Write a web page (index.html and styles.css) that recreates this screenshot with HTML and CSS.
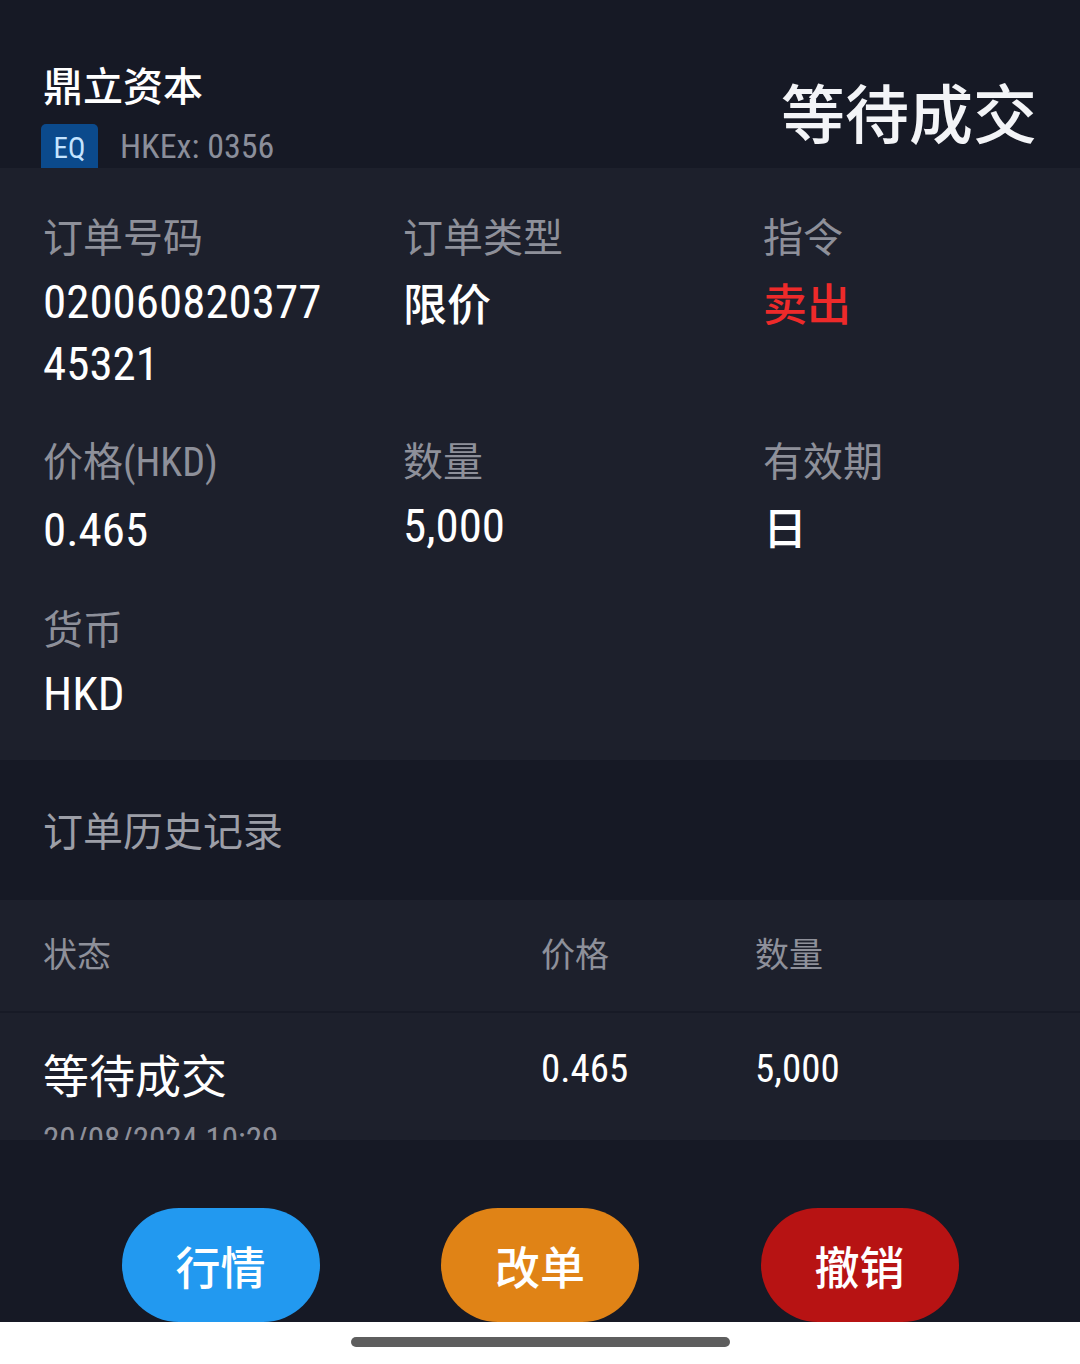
FILE: index.html
```html
<!DOCTYPE html>
<html lang="zh-CN">
<head>
    <meta charset="UTF-8">
    <meta name="viewport" content="width=device-width, initial-scale=1.0">
    <title>订单详情</title>
    <link rel="stylesheet" href="styles.css">
</head>
<body>
    <div class="screen">
        <div class="header">
            <div class="stock">
                <div class="stock-name">鼎立资本</div>
                <div class="stock-code">
                    <span class="badge">EQ</span>
                    <span class="code num">HKEx: 0356</span>
                </div>
            </div>
            <div class="order-status">等待成交</div>
        </div>

        <div class="details">
            <div class="field">
                <div class="label">订单号码</div>
                <div class="value num">020060820377<br>45321</div>
            </div>
            <div class="field">
                <div class="label">订单类型</div>
                <div class="value cjk">限价</div>
            </div>
            <div class="field">
                <div class="label">指令</div>
                <div class="value cjk sell">卖出</div>
            </div>
            <div class="field">
                <div class="label">价格<span class="num">(HKD)</span></div>
                <div class="value num">0.465</div>
            </div>
            <div class="field">
                <div class="label">数量</div>
                <div class="value num">5,000</div>
            </div>
            <div class="field">
                <div class="label">有效期</div>
                <div class="value cjk">日</div>
            </div>
            <div class="field">
                <div class="label">货币</div>
                <div class="value num">HKD</div>
            </div>
        </div>

        <div class="history-title">订单历史记录</div>

        <div class="history">
            <div class="history-row history-head">
                <div class="col-status">状态</div>
                <div class="col-price">价格</div>
                <div class="col-qty">数量</div>
            </div>
            <div class="history-row history-item">
                <div class="col-status">
                    <div class="item-status">等待成交</div>
                    <div class="item-time num">20/08/2024 10:29</div>
                </div>
                <div class="col-price num">0.465</div>
                <div class="col-qty num">5,000</div>
            </div>
        </div>

        <div class="actions">
            <button class="btn btn-quote">行情</button>
            <button class="btn btn-modify">改单</button>
            <button class="btn btn-cancel">撤销</button>
        </div>

        <div class="navbar">
            <div class="nav-pill"></div>
        </div>
    </div>
</body>
</html>
```

FILE: styles.css
```css
body {
    margin: 0;
    font-family: "Noto Sans CJK SC", "Noto Sans", sans-serif;
    background: #161925;
    color: #fff;
}

.screen {
    width: 1080px;
    height: 1364px;
    display: flex;
    flex-direction: column;
    overflow: hidden;
}

.num {
    font-family: "Roboto Condensed", Roboto, "Noto Sans CJK SC", sans-serif;
}

/* header */
.header {
    height: 168px;
    flex: none;
    display: flex;
    justify-content: space-between;
    padding: 0 43px;
    overflow: hidden;
    background: #161925;
}

.stock-name {
    padding-top: 60px;
    font-size: 40px;
    line-height: 48px;
    font-weight: 500;
}

.stock-code {
    display: flex;
    align-items: center;
    margin-top: 16px;
    gap: 22px;
}

.badge {
    width: 57px;
    height: 48px;
    margin-left: -2px;
    border-radius: 5px;
    background: #0b4a8c;
    color: #c4e4ff;
    font-family: "Roboto Condensed", Roboto, sans-serif;
    font-size: 29px;
    line-height: 48px;
    text-align: center;
}

.code {
    font-size: 34px;
    color: #8b8e9a;
    margin-top: -4px;
}

.order-status {
    padding-top: 72px;
    font-size: 64px;
    line-height: 76px;
    font-weight: 500;
    color: #f3f4f7;
}

/* order details */
.details {
    height: 592px;
    flex: none;
    box-sizing: border-box;
    padding: 43px 43px 0;
    background: #1d202c;
    display: grid;
    grid-template-columns: 360px 360px 1fr;
    align-content: start;
    row-gap: 40px;
}

.label {
    font-size: 40px;
    line-height: 48px;
    color: #8e909a;
}

.value {
    margin-top: 12px;
    min-height: 64px;
    font-size: 47px;
    line-height: 62px;
    color: #fff;
}

.value.cjk {
    font-family: "Noto Sans CJK SC", sans-serif;
    font-size: 44px;
    font-weight: 500;
}

.sell {
    color: #ee2a2a;
}

/* history */
.history-title {
    height: 140px;
    flex: none;
    box-sizing: border-box;
    padding: 45px 43px 0;
    font-size: 40px;
    line-height: 48px;
    color: #9c9ea7;
}

.history {
    height: 240px;
    flex: none;
    background: #1d202c;
    overflow: hidden;
}

.history-row {
    display: grid;
    grid-template-columns: 498px 214px 1fr;
    padding: 0 43px;
}

.history-head {
    height: 113px;
    box-sizing: border-box;
    padding-top: 33px;
    font-size: 34px;
    line-height: 40px;
    color: #8e909a;
    border-bottom: 2px solid #171a26;
}

.history-item {
    padding-top: 32px;
}

.item-status {
    font-size: 46px;
    line-height: 56px;
}

.item-time {
    margin-top: 19px;
    font-size: 33px;
    line-height: 40px;
    color: #8e909a;
}

.history-item .col-price,
.history-item .col-qty {
    font-size: 39px;
    line-height: 56px;
    margin-top: -4px;
}

/* bottom actions */
.actions {
    height: 182px;
    flex: none;
    box-sizing: border-box;
    padding-top: 68px;
    display: flex;
    justify-content: space-evenly;
    align-items: flex-start;
    overflow: hidden;
}

.btn {
    width: 198px;
    height: 114px;
    flex: none;
    border: none;
    border-radius: 57px;
    color: #fff;
    font-family: "Noto Sans CJK SC", sans-serif;
    font-size: 45px;
    font-weight: 500;
    line-height: 1;
    padding: 0;
}

.btn-quote {
    background: #2299f0;
}

.btn-modify {
    background: #e08316;
}

.btn-cancel {
    background: #b71313;
}

.navbar {
    flex: 1;
    background: #fff;
    display: flex;
    justify-content: center;
    padding-top: 15px;
}

.nav-pill {
    width: 379px;
    height: 10px;
    border-radius: 5px;
    background: #5e5e5e;
}
```
